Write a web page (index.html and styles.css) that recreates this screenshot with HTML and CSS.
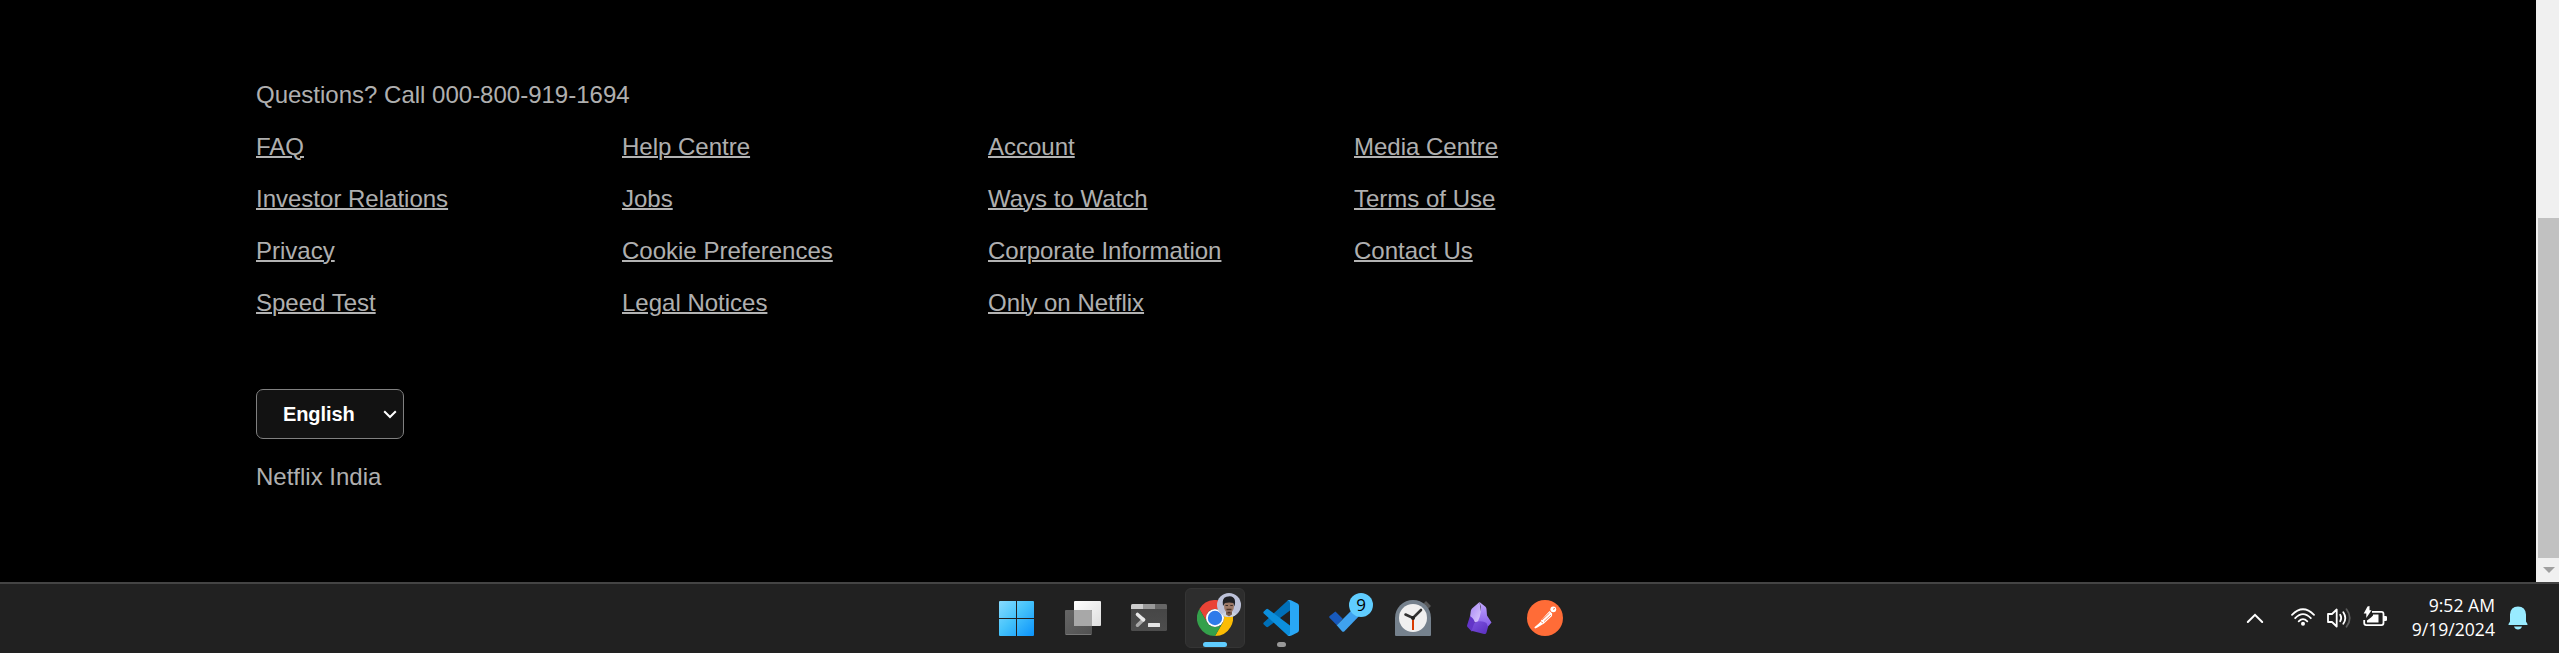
FILE: index.html
```html
<!DOCTYPE html>
<html lang="en">
<head>
<meta charset="utf-8">
<title>Netflix India</title>
<link rel="stylesheet" href="styles.css">
</head>
<body>
<div class="screen">
  <div class="viewport">
    <footer class="footer">
      <p class="line">Questions? Call 000-800-919-1694</p>
      <nav class="links">
        <a href="#">FAQ</a><a href="#">Help Centre</a><a href="#">Account</a><a href="#">Media Centre</a>
        <a href="#">Investor Relations</a><a href="#">Jobs</a><a href="#">Ways to Watch</a><a href="#">Terms of Use</a>
        <a href="#">Privacy</a><a href="#">Cookie Preferences</a><a href="#">Corporate Information</a><a href="#">Contact Us</a>
        <a href="#">Speed Test</a><a href="#">Legal Notices</a><a href="#">Only on Netflix</a>
      </nav>
      <button class="language">
        <span>English</span>
        <svg width="14" height="9" viewBox="0 0 14 9"><path d="M1.2 1.2 7 7 12.800 1.200" fill="none" stroke="#fff" stroke-width="2"/></svg>
      </button>
      <p class="line">Netflix India</p>
    </footer>
    <div class="scrollbar">
      <div class="thumb"></div>
      <div class="arrow"><svg width="12" height="6" viewBox="0 0 12 6"><path d="M0 0h12L6 6z" fill="#a0a0a0"/></svg></div>
    </div>
  </div>

  <div class="taskbar">
    <div class="apps">
      <div class="app">
        <svg class="icon" viewBox="0 0 36 36">
          <defs><linearGradient id="win" gradientUnits="userSpaceOnUse" x1="0" y1="0" x2="36" y2="36"><stop offset="0" stop-color="#8adcff"/><stop offset=".45" stop-color="#47c4fb"/><stop offset="1" stop-color="#0a92fb"/></linearGradient></defs>
          <path d="M1 1h16v17H0V2q0-1 1-1zM18 1h16q1 0 1 1v16H18zM0 19h17v17H1q-1 0-1-1zM18 19h17v16q0 1-1 1H18z" fill="url(#win)"/>
        </svg>
      </div>
      <div class="app">
        <svg class="icon" viewBox="0 0 36 36">
          <defs><linearGradient id="tv" x1="0" y1="0" x2="1" y2="1"><stop offset="0" stop-color="#fff"/><stop offset="1" stop-color="#dedede"/></linearGradient>
          <linearGradient id="tb" x1="0" y1="0" x2="1" y2="1"><stop offset="0" stop-color="#666"/><stop offset="1" stop-color="#505050"/></linearGradient></defs>
          <rect x="9" y="1" width="27" height="25" rx="1" fill="url(#tv)"/>
          <rect x="0" y="10" width="27" height="25" rx="1" fill="url(#tb)"/>
          <path d="M9 10h17q1 0 1 1v15H9z" fill="#a8a8a8"/><path d="M1 34.500h25" stroke="#777"/>
        </svg>
      </div>
      <div class="app">
        <svg class="icon" viewBox="0 0 36 36">
          <defs><linearGradient id="tg" x1="0" y1="0" x2="0" y2="1"><stop offset="0" stop-color="#454545"/><stop offset="1" stop-color="#4d4d4d"/></linearGradient></defs>
          <rect y="4" width="36" height="27" rx="1.500" fill="url(#tg)"/>
          <path d="M1.500 4H12v5H0V5.500Q0 4 1.500 4z" fill="#ccc"/><path d="M12 4h12v5H12z" fill="#999"/><path d="M24 4h10.500Q36 4 36 5.500V9H24z" fill="#666"/>
          <path d="m6.500 25.200 6-5.700" stroke="#a8a8a8" stroke-width="3.600" stroke-linecap="round"/>
          <path d="m6.500 14.500 6 5.300" stroke="#e8e8e8" stroke-width="3.600" stroke-linecap="round"/>
          <rect x="17" y="23" width="12" height="4" rx=".5" fill="#e4e4e4"/>
        </svg>
      </div>
      <div class="app active">
        <svg class="icon" viewBox="0 0 36 36">
          <path d="M2.400 9A18 18 0 0 1 33.600 9H18a9 9 0 0 0-7.800 13.500z" fill="#ea4335"/>
          <path d="M33.600 9A18 18 0 0 1 18 36l7.800-13.500A9 9 0 0 0 18 9z" fill="#fbbc04"/>
          <path d="M18 36A18 18 0 0 1 2.400 9l7.800 13.500a9 9 0 0 0 15.600 0z" fill="#34a04b"/>
          <circle cx="18" cy="18" r="9" fill="#fff"/><circle cx="18" cy="18" r="7.200" fill="#2f7bea"/>
        </svg>
        <svg class="overlay" width="24" height="24" viewBox="0 0 24 24">
          <defs><clipPath id="face"><circle cx="12" cy="12" r="12"/></clipPath></defs>
          <g clip-path="url(#face)"><path fill="#bdc2d9" d="M0 0h24v24H0z"/>
          <path d="M3 24q1-4 6-5h6q5 1 6 5z" fill="#ccd3df"/><path d="M9 16h6v5.500L12 23.500l-3-2z" fill="#7d5e4d"/>
          <ellipse cx="12" cy="13" rx="5" ry="7" fill="#9c7866"/>
          <path d="M6 13Q4.500 5 9.500 3.800q6.500-2 8.300 3 .8 3.200-.3 6.700l-1.200-3.500q-4-1-8.300 0z" fill="#202024"/>
          <path d="M8.500 12.500h2.500M13.300 12.500h2.500" stroke="#3b2c28" stroke-width="1.200"/><path d="M9.500 16.500h5M10.500 19.500h3" stroke="#493329" stroke-width="1.300"/></g>
        </svg>
        <i class="running"></i>
      </div>
      <div class="app">
        <svg class="icon" viewBox="0 0 36 36">
          <path d="M27 .4V10.500L5.200 26.800q-1 .8-2 0L.8 24.500q-1-1.100 0-2.100L24.200 1z" fill="#0070b8"/>
          <path d="M27 35.600V25.500L5.200 9.200q-1-.8-2 0L.8 11.500q-1 1.100 0 2.100L24.200 35z" fill="#0c8fdd"/>
          <path d="M24 35.200q3 .3 3-2.200V3q0-2.500-3-2.200Q26-.6 28.500.4l6 3Q36 4.200 36 6v24q0 1.800-1.500 2.600l-6 3Q26 36.600 24 35.200z" fill="#29a7f5"/>
        </svg>
        <i class="running idle"></i>
      </div>
      <div class="app">
        <svg class="icon" viewBox="0 0 36 36">
          <path d="m6.400 11.500 7.300 7.200-5.800 6.600-7.200-7.200q-1-1 0-2z" fill="#185abd"/>
          <path d="m7.700 25.200 20-20 6.500 6.500L15.200 31.400q-1 .9-2 0z" fill="#3fa2ef"/>
        </svg>
        <span class="overlay badge">9</span>
      </div>
      <div class="app">
        <svg class="icon" viewBox="0 0 36 36">
          <path d="m28 4 3-3 5 5-4 4z" fill="#555"/>
          <path d="M0 18a18 18 0 0 1 36 0v17q0 1-1 1H1q-1 0-1-1z" fill="#75818d"/>
          <circle cx="18" cy="18" r="14" fill="#f0f0f0"/>
          <path d="M18 19v11" stroke="#d83b01" stroke-width="2"/>
          <path d="m10.500 14.500 7.500 3.500 8-8" fill="none" stroke="#333" stroke-width="2.600" stroke-linecap="round"/><circle cx="18" cy="18" r="2" fill="#222"/>
        </svg>
      </div>
      <div class="app">
        <svg class="icon" viewBox="0 0 36 36">
          <defs><linearGradient id="o1" x1="0" y1="0" x2="1" y2="1"><stop offset="0" stop-color="#a684f5"/><stop offset="1" stop-color="#dccbfd"/></linearGradient>
          <linearGradient id="o2" x1="0" y1="0" x2="0" y2="1"><stop offset="0" stop-color="#c2a8ff"/><stop offset="1" stop-color="#8257e6"/></linearGradient>
          <linearGradient id="o3" x1="0" y1="0" x2="1" y2="1"><stop offset="0" stop-color="#7d52e0"/><stop offset="1" stop-color="#5a2fbe"/></linearGradient></defs>
          <path d="M18.500 2 11 8.500q-1 1-1.200 2.500L9 17l5 5.500h5q2-6 1-11z" fill="url(#o1)"/>
          <path d="m18.500 2 6 4.700q1 1 1 2.500l.5 6.300 4.500 7-4.300 5-4-4-5.500-1.500Q22 11 18.500 2z" fill="url(#o2)"/>
          <path d="M9 16q6 4 4.500 9l-2.500 6.700L6.500 27q-.8-1-.3-2z" fill="#6335c8"/>
          <path d="M13.500 22.500q7-2.500 12 .5l1.500 4-1.500 5.500q-.5 2-2.500 1.500l-12.500-3.200z" fill="url(#o3)"/>
        </svg>
      </div>
      <div class="app">
        <svg class="icon" viewBox="0 0 36 36">
          <circle cx="18" cy="18" r="18" fill="#ff6c37"/>
          <circle cx="26.300" cy="9.300" r="2.900" fill="#fff"/><path d="m26 9.300 2-.8" stroke="#ff6c37" stroke-width="1"/>
          <path d="m22.500 11 2.700 2.500-.2 2.500-8 7.500-7 4.300-2 .6-.6-1.200 5-4.200 2-3z" fill="#fff"/>
          <path d="m22.500 13-7.500 7m9-5-7 6.500M13 21l3 2" stroke="#ff6c37" stroke-width=".8"/>
        </svg>
      </div>
    </div>
    <div class="tray">
      <svg class="chevron" width="18" height="12" viewBox="0 0 18 12"><path d="m1.800 10 7.200-7.200 7.200 7.200" fill="none" stroke="#fff" stroke-width="2" stroke-linecap="round"/></svg>
      <svg class="status" viewBox="0 0 24 24">
        <g fill="none" stroke="#fff" stroke-width="1.800" stroke-linecap="round"><path d="M1 8.800q11-11 22 0M4.200 12.200q7.800-8 15.600 0M7.700 15.300q4.300-4.400 8.600 0"/></g><circle cx="12" cy="17.800" r="2" fill="#fff"/>
      </svg>
      <svg class="status" viewBox="0 0 24 24">
        <g fill="none" stroke-width="1.800" stroke-linecap="round" stroke-linejoin="round"><path d="M1 8h4L9.700 3.500v17L5 16H1z" stroke="#fff"/><path d="M13.200 8.800q2 3.200 0 6.400M16.300 6.200q4 5.800 0 11.600" stroke="#fff"/><path d="M19.500 3.300q6.500 8.700 0 17.400" stroke="#5c5c5c"/></g>
      </svg>
      <svg class="status" viewBox="0 0 24 24">
        <path d="M9 5.900h9.500q2 0 2 2v9.200q0 2-2 2H3.200q-2 0-2-2V14" fill="none" stroke="#fff" stroke-width="1.800"/><path d="M10 8.500h5.500v8H4v-2l4-3 2-2z" fill="#fff"/><path d="M21 10h1.500q1.500 0 1.500 1v3q0 1-1.500 1H21z" fill="#fff"/>
        <path d="M4.500.5 6.500 0v4.200H8.500L3.300 12V7.500H.7z" fill="#fff"/>
      </svg>
      <div class="clock"><span>9:52 AM</span><span>9/19/2024</span></div>
      <svg class="bell" width="20" height="24" viewBox="0 0 20 24"><path d="M10 .5q7.500 0 8 8v7l1.500 2.500q.5 1-.6 1H1.100q-1.100 0-.6-1L2 15.500v-7q.5-8 8-8zM6 20.500h8q-1 3-4 3t-4-3z" fill="#99ebff"/></svg>
    </div>
  </div>
</div>
</body>
</html>
```
FILE: styles.css
```css
* { box-sizing: border-box; }
body { margin: 0; background: #000; overflow: hidden; }
.screen { display: flex; flex-direction: column; width: 2559px; height: 653px; }
.viewport { display: flex; justify-content: space-between; height: 582px; background: #000; }

.footer {
  display: flex;
  flex-direction: column;
  align-items: flex-start;
  padding: 77px 0 0 256px;
  color: rgba(255, 255, 255, 0.7);
  font: 24px/36px "Liberation Sans", Arial, sans-serif;
}
.line { margin: 0; }
.links { display: grid; grid-template-columns: repeat(4, 366px); row-gap: 16px; margin-top: 16px; }
.links a { justify-self: start; color: inherit; text-decoration: underline 2px; }
.language {
  display: flex;
  align-items: center;
  justify-content: space-between;
  width: 148px;
  height: 50px;
  margin: 68px 0 20px;
  padding: 0 6px 0 26px;
  border: 1px solid #808080;
  border-radius: 7px;
  background: #121212;
  color: #fff;
  font: bold 20px/30px "Liberation Sans", Arial, sans-serif;
}
.language span { letter-spacing: -0.1px; }

.scrollbar { display: flex; flex-direction: column; width: 23px; padding: 218px 0 0 2px; background: #f0f0f0; }
.thumb { height: 340px; background: #c1c1c1; }
.arrow { display: flex; flex: 1; align-items: center; justify-content: center; }

.taskbar {
  display: flex;
  height: 71px;
  padding-left: 984px;
  border-top: 2px solid #444;
  background: #212121;
}
.apps { display: flex; height: 68px; }
.app { position: relative; display: flex; align-items: center; justify-content: center; width: 66px; }
.app.active::before {
  content: "";
  position: absolute;
  inset: 4px 3px;
  border: 1px solid #353535;
  border-radius: 6px;
  background: #2d2d2d;
}
.icon { position: relative; width: 36px; height: 36px; }
.overlay { position: absolute; top: 9px; left: 35px; }
.badge {
  width: 24px;
  height: 24px;
  border-radius: 50%;
  background: #60cdff;
  color: #000;
  font: 17px/24px "Open Sans", sans-serif;
  text-align: center;
}
.running { position: absolute; top: 58px; left: 21px; width: 24px; height: 5px; border-radius: 2.5px; background: #60cdff; }
.running.idle { left: 29px; width: 9px; background: #999; }

.tray { display: flex; align-items: center; flex: 1; height: 68px; justify-content: flex-end; padding-right: 31px; }
.chevron { margin-right: 27px; }
.status { width: 24px; height: 24px; margin-right: 12px; }
.clock {
  display: flex;
  flex-direction: column;
  align-items: flex-end;
  width: 96px;
  margin: 0 13px 2px 0;
  color: #fff;
  font: 17.600px/24px "Open Sans", sans-serif;
}
```
